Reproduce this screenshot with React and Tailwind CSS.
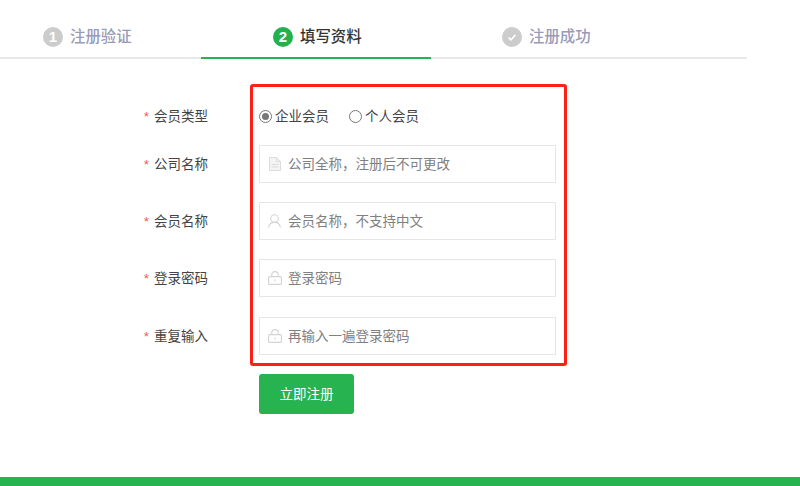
const font = { fontFamily: '"Liberation Sans", "Noto Sans CJK SC", sans-serif' };

function Step({ className, active, mark, label }) {
  return (
    <div className={`flex h-[59px] items-center pt-[20px] pb-[3px] ${active ? 'border-b-2 border-[#28b351]' : 'border-b-2 border-[#e8e8e8]'} ${className}`}>
      <span className={`flex h-5 w-5 items-center justify-center rounded-full text-[15px] font-bold text-white ${active ? 'bg-[#23b14d]' : 'bg-[#cccccc]'}`}>
        {mark}
      </span>
      <span className={`ml-[7px] text-[15.4px] font-medium ${active ? 'text-[#333333]' : 'text-[#9a9bb8]'}`}>{label}</span>
    </div>
  );
}

const Check = (
  <svg width="12" height="12" viewBox="0 0 12 12" fill="none" stroke="white" strokeWidth="1.6">
    <path d="M2.5 6.5 L5 8.8 L9.5 3.8" />
  </svg>
);

const DocIcon = (
  <svg width="12" height="14" viewBox="0 0 12 14" fill="none" stroke="#dcdcdc" strokeWidth="1">
    <path d="M0.5 0.5 H7.5 L11.5 4.5 V13.5 H0.5 Z" fill="#f4f4f4" />
    <path d="M7.5 0.5 V4.5 H11.5 M2.5 7.5 H9.5 M2.5 10 H9.5" />
  </svg>
);

const UserIcon = (
  <svg width="13" height="14" viewBox="0 0 13 14" fill="none" stroke="#d4d4d4" strokeWidth="1.1">
    <circle cx="6.5" cy="4.5" r="3.8" />
    <path d="M0.6 13.5 C1 10.5 3.5 8.4 6.5 8.4 C9.5 8.4 12 10.5 12.4 13.5" />
  </svg>
);

const LockIcon = (
  <svg width="14" height="14" viewBox="0 0 14 14" fill="none" stroke="#d4d4d4" strokeWidth="1.1">
    <rect x="0.6" y="5.6" width="12.8" height="7.8" rx="1" />
    <path d="M3.8 5.6 V3.6 C3.8 1.8 5.2 0.6 7 0.6 C8.8 0.6 10.2 1.8 10.2 3.6 V5.6 M7 8.5 V10.5" />
  </svg>
);

function Label({ children }) {
  return (
    <label className="w-[259px] pr-[51px] pt-[2px] text-right text-[13.5px] text-[#444444]">
      <span className="mr-[5px] text-[#f25a5a]">*</span>
      {children}
    </label>
  );
}

function Field({ label, icon, placeholder, className }) {
  return (
    <div className={`flex items-center ${className}`}>
      <Label>{label}</Label>
      <div className="flex h-[38px] w-[297px] items-center border border-[#e6e6e6] bg-white pl-[7px]">
        <span className="flex w-[15px] justify-center">{icon}</span>
        <span className="ml-[6px] pt-[2px] text-[13.5px] text-[#808080]">{placeholder}</span>
      </div>
    </div>
  );
}

export default function App() {
  return (
    <div className="relative h-[486px] w-[800px] overflow-hidden bg-white" style={font}>
      <div className="flex w-[747px]">
        <Step className="w-[201px] pl-[43px]" mark="1" label="注册验证" />
        <Step className="w-[230px] pl-[72px]" active mark="2" label="填写资料" />
        <Step className="w-[316px] pl-[71px]" mark={Check} label="注册成功" />
      </div>

      <div className="mt-[47px] flex h-[20px] items-center">
        <Label>会员类型</Label>
        <span className="flex h-[13px] w-[13px] items-center justify-center rounded-full border border-[#777777]">
          <span className="h-[7px] w-[7px] rounded-full bg-[#777777]" />
        </span>
        <span className="ml-[3px] pt-[2px] text-[13.5px] text-[#444444]">企业会员</span>
        <span className="ml-[20px] h-[13px] w-[13px] rounded-full border border-[#777777]" />
        <span className="ml-[3px] pt-[2px] text-[13.5px] text-[#444444]">个人会员</span>
      </div>

      <Field className="mt-[19px]" label="公司名称" icon={DocIcon} placeholder="公司全称，注册后不可更改" />
      <Field className="mt-[19px]" label="会员名称" icon={UserIcon} placeholder="会员名称，不支持中文" />
      <Field className="mt-[19px]" label="登录密码" icon={LockIcon} placeholder="登录密码" />
      <Field className="mt-[20px]" label="重复输入" icon={LockIcon} placeholder="再输入一遍登录密码" />

      <button className="ml-[259px] mt-[19px] block h-[40px] w-[95px] rounded-[3px] bg-[#27b350] pt-[2px] text-[13.5px] text-white">
        立即注册
      </button>

      {/* annotation box over the form */}
      <div className="pointer-events-none absolute left-[250px] top-[84px] h-[282px] w-[317px] rounded-[3px] border-[3px] border-[#fb2117]" />

      <div className="absolute bottom-0 left-0 h-[9px] w-full bg-[#27b350]" />
    </div>
  );
}
